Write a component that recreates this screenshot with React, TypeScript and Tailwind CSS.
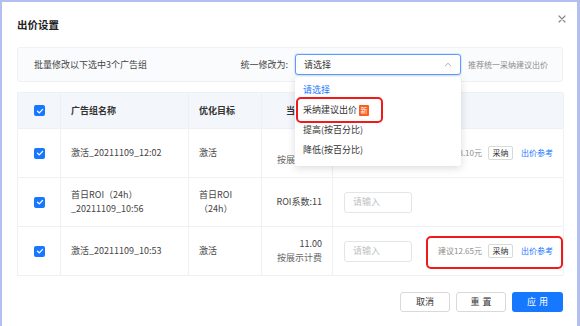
import React from "react";

const font = { fontFamily: '"Noto Sans CJK SC", "Noto Sans", sans-serif' };

function Check() {
  return (
    <div className="w-[11px] h-[11px] rounded-[2px] bg-[#1677ff] flex items-center justify-center">
      <svg width="8" height="8" viewBox="0 0 8 8">
        <path d="M1.5 4.2 L3.3 5.9 L6.6 2.4" stroke="white" strokeWidth="1.3" fill="none" strokeLinecap="round" strokeLinejoin="round" />
      </svg>
    </div>
  );
}

function Input() {
  return (
    <div className="w-[68px] h-[21px] border border-[#e3e5e8] rounded-[3px] flex items-center pl-[8px] text-[9px] text-[#bfbfbf]">
      请输入
    </div>
  );
}

function Suggest({ text, boxed }: { text: string; boxed?: boolean }) {
  if (!text) return null;
  return (
    <div className="relative h-full flex items-center justify-end pr-[10px]">
      {boxed && (
        <div className="absolute left-[5px] right-0 top-[9px] bottom-[6px] border-[2.5px] border-[#f01a1a] rounded-[5px]" />
      )}
      <span className="text-[8px] text-[#8c8c8c] mr-[6px]">{text}</span>
      <div className="w-[25px] h-[14px] border border-[#d9d9d9] rounded-[2px] flex items-center justify-center text-[8px] text-[#333] bg-white">采纳</div>
      <span className="text-[8px] text-[#1677ff] ml-[8px]">出价参考</span>
    </div>
  );
}

const cols = "grid grid-cols-[43px_128px_73px_71px_88px_143px]";
const cell = "border-r border-[#eef0f3] flex items-center";

function Row({ name, target, bid, input, suggest, boxed }: { name: React.ReactNode; target: React.ReactNode; bid: React.ReactNode; input: boolean; suggest: string; boxed?: boolean }) {
  return (
    <div className={`${cols} h-[49px] border-b border-[#eef0f3] text-[9px] text-[#444]`}>
      <div className={`${cell} justify-center pl-[1px]`}><Check /></div>
      <div className={`${cell} pl-[10px] leading-[14px]`}>{name}</div>
      <div className={`${cell} pl-[10px] leading-[14px]`}>{target}</div>
      <div className={`${cell} justify-end pr-[10px] text-right leading-[14px]`}>{bid}</div>
      <div className="flex items-center pl-[11px]">{input && <Input />}</div>
      <div className="border-r border-[#eef0f3]"><Suggest text={suggest} boxed={boxed} /></div>
    </div>
  );
}

export default function App() {
  return (
    <div className="w-[580px] h-[326px] bg-[#b2bff0] pl-[2px] pt-[2px] pr-[3px] overflow-hidden" style={font}>
      <div className="relative bg-white h-[330px] pl-[15px] pr-[14px] pt-[16px]">
        <div className="h-[14px] leading-[14px] text-[10.5px] font-bold text-[#222]">出价设置</div>
        <svg className="absolute top-[13px] right-[11px]" width="8" height="8" viewBox="0 0 8 8">
          <path d="M1 1 L7 7 M7 1 L1 7" stroke="#8a8a8a" strokeWidth="1.2" strokeLinecap="round" />
        </svg>

        <div className="mt-[15px] h-[35px] bg-[#fafbfc] border border-[#f0f1f3] rounded-[3px] flex items-center justify-between pl-[16px] pr-[14px]">
          <span className="text-[9px] text-[#444]">批量修改以下选中3个广告组</span>
          <div className="flex items-center">
            <span className="text-[9px] text-[#444] mr-[7px]">统一修改为:</span>
            <div className="relative">
              <div className="w-[166px] h-[21px] border border-[#5b9cff] rounded-[3px] bg-white flex items-center justify-between pl-[8px] pr-[8px] shadow-[0_0_0_1px_rgba(22,119,255,0.12)]">
                <span className="text-[9px] text-[#333]">请选择</span>
                <svg width="8" height="5" viewBox="0 0 8 5">
                  <path d="M1 4.2 L4 1.2 L7 4.2" stroke="#aaa" strokeWidth="1" fill="none" />
                </svg>
              </div>
              <div className="absolute z-10 left-0 top-[23px] w-[166px] bg-white rounded-[3px] shadow-[0_2px_8px_rgba(0,0,0,0.15)] pt-[3px] pb-[6px] text-[9px]">
                <div className="h-[20px] flex items-center pl-[8px] text-[#1677ff]">请选择</div>
                <div className="relative h-[20px] flex items-center pl-[8px] text-[#333]">
                  <div className="absolute left-[1px] w-[87px] top-[-3px] bottom-[-3px] border-[2.5px] border-[#f01a1a] rounded-[5px]" />
                  采纳建议出价
                  <span className="ml-[2px] w-[10px] h-[11px] bg-[#ff5a1f] text-white text-[7px] leading-[11px] text-center rounded-[1px]">新</span>
                </div>
                <div className="h-[20px] flex items-center pl-[8px] text-[#333]">提高(按百分比)</div>
                <div className="h-[20px] flex items-center pl-[8px] text-[#333]">降低(按百分比)</div>
              </div>
            </div>
            <span className="text-[8px] text-[#8c8c8c] ml-[7px]">推荐统一采纳建议出价</span>
          </div>
        </div>

        <div className="mt-[10px] border-l border-t border-[#eef0f3]">
          <div className={`${cols} h-[36px] bg-[#f3f6fa] border-b border-[#eef0f3] text-[9px] font-bold text-[#333]`}>
            <div className={`${cell} justify-center pl-[1px]`}><Check /></div>
            <div className={`${cell} pl-[10px]`}>广告组名称</div>
            <div className={`${cell} pl-[10px]`}>优化目标</div>
            <div className={`${cell} justify-end pr-[10px]`}>当前出价</div>
            <div className="flex items-center pl-[11px]" />
            <div className="border-r border-[#eef0f3]" />
          </div>
          <Row
            name="激活_20211109_12:02"
            target="激活"
            bid={<div><div className="invisible">11.00</div><div className="text-[#666]">按展示计费</div></div>}
            input={false}
            suggest="建议8.10元"
          />
          <Row
            name={<div><div>首日ROI（24h）</div><div>_20211109_10:56</div></div>}
            target={<div><div>首日ROI</div><div>（24h）</div></div>}
            bid={<div>ROI系数:11</div>}
            input
            suggest=""
          />
          <Row
            name="激活_20211109_10:53"
            target="激活"
            bid={<div><div>11.00</div><div className="text-[#666]">按展示计费</div></div>}
            input
            suggest="建议12.65元"
            boxed
          />
        </div>

        <div className="mt-[16px] flex justify-end gap-[6px]">
          <div className="w-[50px] h-[20px] border border-[#d9d9d9] rounded-[3px] flex items-center justify-center text-[9px] text-[#333]">取消</div>
          <div className="w-[50px] h-[20px] border border-[#d9d9d9] rounded-[3px] flex items-center justify-center text-[9px] text-[#333] tracking-[3px] pl-[3px]">重置</div>
          <div className="w-[51px] h-[20px] bg-[#1677ff] rounded-[3px] flex items-center justify-center text-[9px] text-white tracking-[3px] pl-[3px]">应用</div>
        </div>
      </div>
    </div>
  );
}
